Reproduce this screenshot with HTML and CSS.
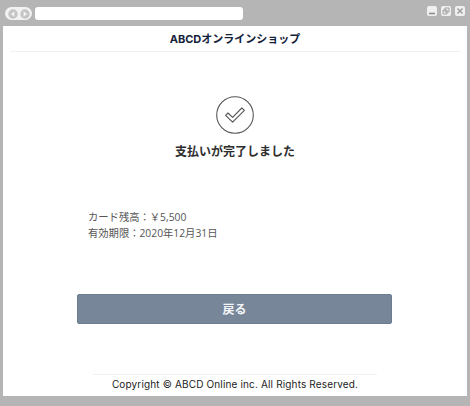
FILE: index.html
```html
<!DOCTYPE html>
<html lang="ja">
<head>
<meta charset="utf-8">
<title>ABCDオンラインショップ</title>
<link rel="stylesheet" href="styles.css">
</head>
<body>
<div class="window">
  <div class="chrome">
    <div class="nav">
      <span class="nav-btn"><svg viewBox="0 0 12 12" width="12" height="12"><circle cx="6" cy="6" r="4.7" fill="#c4c4c4"/><path d="M7.4 3.2 3.8 6l3.6 2.8z" fill="#f2f2f2"/></svg></span>
      <span class="nav-btn"><svg viewBox="0 0 12 12" width="12" height="12"><circle cx="6" cy="6" r="4.7" fill="#c4c4c4"/><path d="M4.6 3.2 8.2 6 4.6 8.8z" fill="#f2f2f2"/></svg></span>
    </div>
    <div class="address"></div>
    <div class="controls">
      <span class="ctl"><svg viewBox="0 0 10 10" width="10" height="10"><path d="M2 7.5h6" stroke="#8c8c8c" stroke-width="1.6"/></svg></span>
      <span class="ctl"><svg viewBox="0 0 10 10" width="10" height="10"><path d="M4 2h4v4H4zM2 4h4v4H2z" fill="none" stroke="#a0a0a0"/></svg></span>
      <span class="ctl"><svg viewBox="0 0 10 10" width="10" height="10"><path d="M2.5 2.5l5 5M7.5 2.5l-5 5" stroke="#999" stroke-width="1.4"/></svg></span>
    </div>
  </div>
  <main class="page">
    <header class="header"><h1 class="shop">ABCDオンラインショップ</h1></header>
    <section class="done">
      <svg class="check" viewBox="0 0 38 38" width="38" height="38">
        <circle cx="19" cy="19" r="18.3" fill="none" stroke="#555" stroke-width="1.1"/>
        <path d="M9.6 19.4 12 17l4.6 4.3L25.8 12l2.6 2.4-11.8 11.8z" fill="none" stroke="#555" stroke-width="1.1" stroke-linejoin="round"/>
      </svg>
      <p class="done-msg">支払いが完了しました</p>
    </section>
    <section class="info">
      <p>カード残高：￥5,500</p>
      <p>有効期限：2020年12月31日</p>
    </section>
    <button class="back" type="button">戻る</button>
    <footer class="footer">Copyright © ABCD Online inc. All Rights Reserved.</footer>
  </main>
</div>
</body>
</html>
```

FILE: styles.css
```css
* { box-sizing: border-box; }
html, body { margin: 0; padding: 0; }
body {
  width: 470px;
  height: 406px;
  overflow: hidden;
  font-family: "Open Sans", "Noto Sans CJK JP", sans-serif;
}
.window {
  width: 470px;
  height: 406px;
  background: #b5b5b5;
  padding: 0 3px 10px;
  display: flex;
  flex-direction: column;
}
.chrome {
  height: 26px;
  flex: none;
  display: flex;
  align-items: flex-start;
  padding: 7px 0 0 2px;
}
.nav {
  width: 27px;
  height: 13px;
  background: #f2f2f2;
  border-radius: 7px;
  display: flex;
  align-items: center;
  justify-content: center;
  flex: none;
}
.nav-btn { display: flex; }
.address {
  width: 208px;
  height: 13px;
  margin-left: 3px;
  background: #fff;
  border-radius: 3px;
  flex: none;
}
.controls {
  margin-left: auto;
  margin-top: -1px;
  display: flex;
  gap: 4px;
  padding-right: 2px;
}
.ctl {
  width: 10px;
  height: 10px;
  background: #efefef;
  border-radius: 2px;
  display: flex;
}
.page {
  flex: 1;
  background: #fff;
  display: flex;
  flex-direction: column;
  align-items: center;
}
.header {
  width: 450px;
  height: 26px;
  border-bottom: 1px solid #f0f1f5;
  padding-top: 1px;
  display: flex;
  align-items: center;
  justify-content: center;
  flex: none;
}
.shop {
  margin: 0;
  font-family: Inter, "Noto Sans CJK JP", sans-serif;
  font-size: 11px;
  line-height: 16px;
  font-weight: 700;
  color: #14213a;
}
.done {
  margin-top: 44px;
  display: flex;
  flex-direction: column;
  align-items: center;
}
.check { display: block; }
.done-msg {
  margin: 8px 0 0;
  font-size: 12px;
  line-height: 18px;
  font-weight: 700;
  color: #2e2e2e;
  font-family: "Noto Sans CJK JP", sans-serif;
}
.info {
  align-self: flex-start;
  margin: 49px 0 0 85px;
  font-size: 10.3px;
  line-height: 16px;
  color: #555;
}
.info p { margin: 0; }
.back {
  margin: 53px 1px 0 0;
  width: 315px;
  height: 30px;
  border: 1px solid #6d7d90;
  border-radius: 2px;
  background: #788699;
  color: #f4f6f8;
  font-family: "Noto Sans CJK JP", sans-serif;
  font-size: 12px;
  font-weight: 700;
  padding: 0 0 2px;
  flex: none;
}
.footer {
  margin-top: auto;
  width: 284px;
  height: 22px;
  border-top: 1px solid #f0f1f5;
  text-align: center;
  font-family: Inter, sans-serif;
  font-size: 10px;
  letter-spacing: 0.15px;
  line-height: 18px;
  color: #222;
  white-space: nowrap;
}
```
